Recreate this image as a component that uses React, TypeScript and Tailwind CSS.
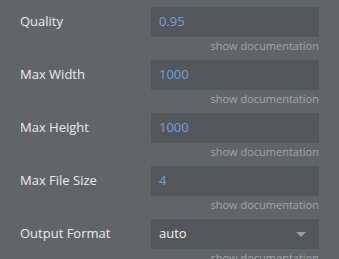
import React from "react";

interface Field {
  label: string;
  value: string;
  select?: boolean;
}

const fields: Field[] = [
  { label: "Quality", value: "0.95" },
  { label: "Max Width", value: "1000" },
  { label: "Max Height", value: "1000" },
  { label: "Max File Size", value: "4" },
  { label: "Output Format", value: "auto", select: true },
];

export default function App() {
  return (
    <div
      className="h-[259px] w-[339px] overflow-hidden bg-[#606568] pt-[7px]"
      style={{ fontFamily: '"Open Sans", "Liberation Sans", sans-serif' }}
    >
      {fields.map((f) => (
        <div key={f.label} className="mb-[6px]">
          <div className="flex h-[30px] items-center">
            <div className="w-[151px] pl-[20px] text-[13px] text-[#ececec]">{f.label}</div>
            <div className="flex h-[30px] w-[168px] items-center justify-between bg-[#53575a] pl-[8px] pr-[13px]">
              <span className={`text-[13px] ${f.select ? "text-[#f2f2f2]" : "text-[#6fa3e0]"}`}>
                {f.value}
              </span>
              {f.select && (
                <svg width="10" height="5" viewBox="0 0 10 5">
                  <path d="M0 0 L10 0 L5 5 Z" fill="#9da1a4" />
                </svg>
              )}
            </div>
          </div>
          <div className="mt-[1px] w-[319px] text-right text-[11px] leading-[16px] text-[#a3a7a9]">
            show documentation
          </div>
        </div>
      ))}
    </div>
  );
}
